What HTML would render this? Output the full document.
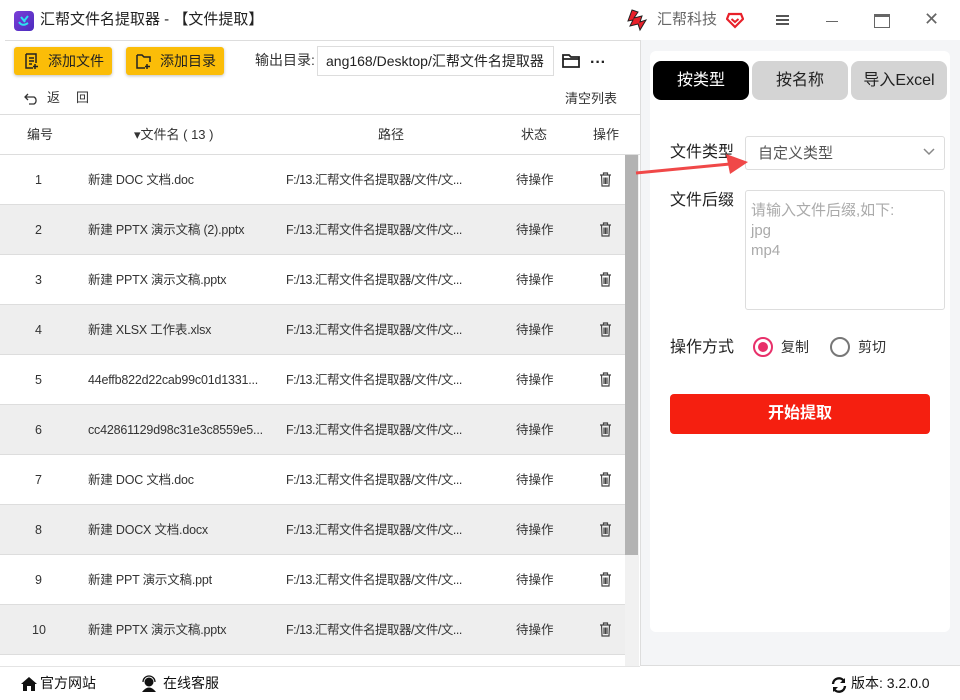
<!DOCTYPE html>
<html><head><meta charset="utf-8"><style>
*{box-sizing:border-box;margin:0;padding:0}
body{width:960px;height:700px;overflow:hidden;background:#fff;font-family:"Liberation Sans","Noto Sans CJK SC",sans-serif;color:#222;position:relative;line-height:1.2}
.a{position:absolute}
.btn{position:absolute;top:47px;height:28px;background:#fbbd08;border-radius:3px;font-size:14px;line-height:28px;box-shadow:0 1px 3px rgba(0,0,0,.25);padding-left:34px;color:#222}
.row{position:absolute;left:0;width:625px;height:50px;border-bottom:1px solid #ddd;font-size:12.5px;color:#333}
.row span{position:absolute;top:17px;line-height:16px;white-space:nowrap}
.g{background:#eee}
.tab{position:absolute;top:61px;height:39px;width:96px;border-radius:8px;background:#d4d4d4;text-align:center;line-height:39px;font-size:16px;color:#222}
</style></head><body>
<!-- title -->
<div class="a" style="left:14px;top:11px;width:20px;height:20px;border-radius:4px;background:linear-gradient(135deg,#7b3fd8,#4a2bbd)"></div>
<svg class="a" style="left:16px;top:13px" width="16" height="16"><path d="M3 9 Q6 14 12 10 M5 4 L9 9 M12 3 L8 8" stroke="#2de0f0" stroke-width="2" fill="none"/></svg>
<div class="a" style="left:40px;top:11px;font-size:15px;color:#222">汇帮文件名提取器 - 【文件提取】</div>
<svg class="a" style="left:626px;top:8px" width="22" height="24"><path d="M6 2 L12 4 L8 10 L16 8 L14 14 L20 12 L14 22 L12 16 L4 18 L7 12 L2 13 Z" fill="#e8202a" stroke="#222" stroke-width="1"/></svg>
<div class="a" style="left:657px;top:11px;font-size:15px;color:#666">汇帮科技</div>
<svg class="a" style="left:726px;top:11px" width="18" height="18"><path d="M3 3 H15 L17 8 L9 16 L1 8 Z" fill="none" stroke="#e8202a" stroke-width="2.2"/><path d="M5.5 8 L9 11 L12.5 8" fill="none" stroke="#e8202a" stroke-width="2"/></svg>
<div class="a" style="left:776px;top:15px;width:13px;height:2px;background:#555;box-shadow:0 4px #555,0 8px #555"></div>
<div class="a" style="left:826px;top:21px;width:12px;height:1px;background:#666"></div>
<div class="a" style="left:874px;top:14px;width:16px;height:14px;border:1.5px solid #666;border-top-width:3px"></div>
<div class="a" style="left:924px;top:9px;font-size:18px;color:#666">✕</div>
<div class="a" style="left:5px;top:40px;width:635px;height:1px;background:#ddd"></div>
<!-- toolbar -->
<div class="btn" style="left:14px;width:98px">添加文件</div>
<svg class="a" style="left:24px;top:53px" width="16" height="17"><path d="M2 1 H12 V10 M2 1 V15 H9 M5 5 H10 M5 8 H10 M5 11 H8 M11 11 V16 M9 13.5 H14" fill="none" stroke="#222" stroke-width="1.5"/></svg>
<div class="btn" style="left:126px;width:98px">添加目录</div>
<svg class="a" style="left:136px;top:53px" width="17" height="17"><path d="M1 2 H6 L8 4 H14 V9 M1 2 V15 H9 M11 11 V16 M9 13.5 H14" fill="none" stroke="#222" stroke-width="1.5"/></svg>
<div class="a" style="left:255px;top:52px;font-size:14px;color:#333">输出目录:</div>
<div class="a" style="left:317px;top:46px;width:237px;height:30px;border:1px solid #ddd;font-size:14px;line-height:28px;padding-left:8px;overflow:hidden;white-space:nowrap;color:#222">ang168/Desktop/汇帮文件名提取器</div>
<svg class="a" style="left:562px;top:53px" width="19" height="16"><path d="M1 2 H7 L9 4 H17 V14 H1 Z M1 6 H17" fill="none" stroke="#222" stroke-width="1.8"/></svg>
<div class="a" style="left:590px;top:53px;font-size:16px;font-weight:bold;color:#222">···</div>
<svg class="a" style="left:24px;top:91px" width="16" height="14"><path d="M4 3 L1 6 L4 9 M1 6 H10 A4 4 0 0 1 10 13 H5" fill="none" stroke="#333" stroke-width="1.3"/></svg>
<div class="a" style="left:47px;top:90px;font-size:13px;color:#333">返</div>
<div class="a" style="left:76px;top:90px;font-size:13px;color:#333">回</div>
<div class="a" style="left:565px;top:91px;font-size:13px;color:#333">清空列表</div>
<div class="a" style="left:0;top:114px;width:640px;height:1px;background:#ddd"></div>
<!-- header -->
<div class="a" style="left:0;top:115px;width:640px;height:40px;font-size:13px;color:#333">
<span class="a" style="left:27px;top:12px">编号</span>
<span class="a" style="left:134px;top:12px">▾文件名 ( 13 )</span>
<span class="a" style="left:378px;top:12px">路径</span>
<span class="a" style="left:521px;top:12px">状态</span>
<span class="a" style="left:593px;top:12px">操作</span></div>
<div class="a" style="left:0;top:154px;width:640px;height:1px;background:#ddd"></div>
<div id="rows"></div>
<script>
var n=["新建 DOC 文档.doc","新建 PPTX 演示文稿 (2).pptx","新建 PPTX 演示文稿.pptx","新建 XLSX 工作表.xlsx","44effb822d22cab99c01d1331...","cc42861129d98c31e3c8559e5...","新建 DOC 文档.doc","新建 DOCX 文档.docx","新建 PPT 演示文稿.ppt","新建 PPTX 演示文稿.pptx"];
var h="";
for(var i=0;i<10;i++){h+='<div class="row'+(i%2?' g':'')+'" style="top:'+(155+i*50)+'px"><span style="left:'+(i==9?32:35)+'px">'+(i+1)+'</span><span style="left:88px;letter-spacing:-0.2px">'+n[i]+'</span><span style="left:286px;letter-spacing:-0.5px">F:/13.汇帮文件名提取器/文件/文...</span><span style="left:516px">待操作</span><svg style="position:absolute;left:599px;top:17px" width="13" height="15"><path d="M1 3 H12 M4.5 3 V1 H8.5 V3 M2.5 3 L3 14 H10 L10.5 3 M5 5.5 V12 M6.5 5.5 V12 M8 5.5 V12" fill="none" stroke="#444" stroke-width="1.2"/></svg></div>';}
document.getElementById("rows").innerHTML=h;
</script>
<div class="a" style="left:625px;top:155px;width:14px;height:511px;background:#f1f1f1"></div>
<div class="a" style="left:625px;top:155px;width:13px;height:400px;background:#b3b3b3"></div>
<div class="a" style="left:0;top:666px;width:640px;height:1px;background:#e4e4e4"></div>
<!-- footer -->
<svg class="a" style="left:20px;top:676px" width="18" height="16"><path d="M9 1 L1 8 H3 V15 H7 V10 H11 V15 H15 V8 H17 Z" fill="#111"/></svg>
<div class="a" style="left:40px;top:675px;font-size:14px;color:#111">官方网站</div>
<svg class="a" style="left:140px;top:675px" width="18" height="18"><circle cx="9" cy="7" r="4.5" fill="#111"/><path d="M2 17 Q9 8 16 17 Z" fill="#111"/><path d="M3 7 A6 6 0 0 1 15 7" fill="none" stroke="#111" stroke-width="1.3"/></svg>
<div class="a" style="left:163px;top:675px;font-size:14px;color:#111">在线客服</div>
<div class="a" style="left:640px;top:40px;width:320px;height:626px;background:#f4f5f7;border-left:1px solid #ddd;border-bottom:1px solid #ddd"></div>
<svg class="a" style="left:831px;top:677px" width="16" height="16"><path d="M2 7 A6 6 0 0 1 13 4 M14 9 A6 6 0 0 1 3 12" fill="none" stroke="#111" stroke-width="2.4"/><path d="M14 1 V6 H9 Z M2 15 V10 H7 Z" fill="#111"/></svg>
<div class="a" style="left:851px;top:675px;font-size:14px;color:#111">版本: 3.2.0.0</div>
<!-- right card -->
<div class="a" style="left:650px;top:51px;width:300px;height:581px;background:#fff;border-radius:6px"></div>
<div class="tab" style="left:653px;background:#000;color:#fff">按类型</div>
<div class="tab" style="left:752px">按名称</div>
<div class="tab" style="left:851px">导入Excel</div>
<div class="a" style="left:670px;top:143px;font-size:16px;color:#222">文件类型</div>
<div class="a" style="left:745px;top:136px;width:200px;height:34px;border:1px solid #ddd;border-radius:3px;font-size:15px;color:#555;line-height:34px;padding-left:12px">自定义类型</div>
<svg class="a" style="left:923px;top:148px" width="12" height="8"><path d="M1 1 L6 6 L11 1" fill="none" stroke="#888" stroke-width="1.5"/></svg>
<div class="a" style="left:670px;top:191px;font-size:16px;color:#222">文件后缀</div>
<div class="a" style="left:745px;top:190px;width:200px;height:120px;border:1px solid #ddd;border-radius:3px;font-size:15px;color:#aaa;line-height:20px;padding:10px 0 0 5px">请输入文件后缀,如下:<br>jpg<br>mp4</div>
<div class="a" style="left:670px;top:338px;font-size:16px;color:#222">操作方式</div>
<div class="a" style="left:753px;top:337px;width:20px;height:20px;border:2px solid #e8306a;border-radius:50%"></div>
<div class="a" style="left:758px;top:342px;width:10px;height:10px;background:#e8306a;border-radius:50%"></div>
<div class="a" style="left:781px;top:339px;font-size:14px;color:#333">复制</div>
<div class="a" style="left:830px;top:337px;width:20px;height:20px;border:2px solid #777;border-radius:50%"></div>
<div class="a" style="left:858px;top:339px;font-size:14px;color:#333">剪切</div>
<div class="a" style="left:670px;top:394px;width:260px;height:40px;background:#f51f10;border-radius:4px;color:#fff;font-size:16px;font-weight:bold;text-align:center;line-height:40px">开始提取</div>
<!-- arrow -->
<svg class="a" style="left:630px;top:150px" width="130" height="30"><path d="M6 23 L100 14" stroke="#f04848" stroke-width="3"/><path d="M118 12 L96 4 L100 24 Z" fill="#f04848"/></svg>
</body></html>
